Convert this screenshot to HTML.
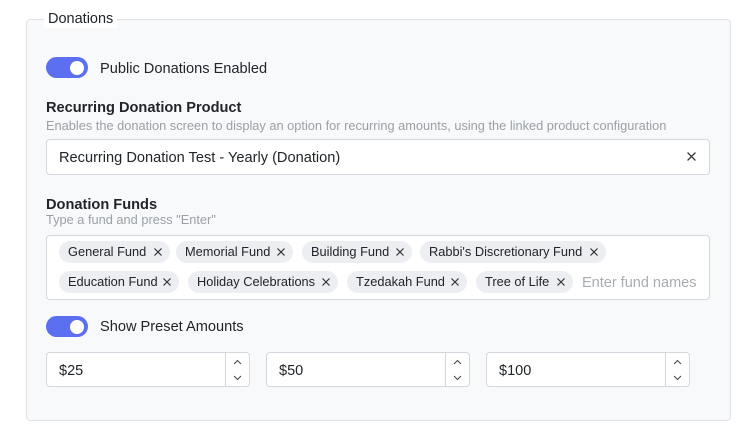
<!DOCTYPE html>
<html><head><style>
*{box-sizing:border-box;margin:0;padding:0}
body{width:749px;height:440px;background:#fff;font-family:"Liberation Sans",sans-serif;color:#212529;position:relative;overflow:hidden}
.a{position:absolute}
.fs{left:26px;top:19px;width:705px;height:402px;background:#f8f9fa;border:1px solid #dee2e6;border-radius:4px}
.leg{left:44px;top:10px;padding:0 4px;background:#fff;font-size:14.5px;line-height:18px}
.tog{width:42px;height:21px;border-radius:11px;background:#5b6ff0}
.tog:after{content:"";position:absolute;right:4px;top:3.5px;width:14px;height:14px;border-radius:50%;background:#fff}
.lbl{font-size:14.6px;line-height:16px;white-space:nowrap}
.b{font-weight:600}
.d{font-size:12.8px;color:#9aa0a6;line-height:14px;white-space:nowrap}
.box{background:#fff;border:1px solid #d4d8dd;border-radius:4px}
.tag{height:22px;border-radius:11px;background:#eceef1;font-size:12.8px;line-height:22px;padding-left:9px;white-space:nowrap}
.tag svg{position:absolute;right:8px;top:7px}
.num{height:35px;width:204px}
.num span{position:absolute;left:12px;top:10px;font-size:14.5px}
.sp{position:absolute;right:0;top:0;width:24px;height:33px;border-left:1px solid #d4d8dd}
.sp svg{position:absolute;left:7px}
</style></head><body>
<svg width="0" height="0" style="position:absolute"><defs>
<symbol id="x" viewBox="0 0 8 8"><path d="M0.5 0.5L7.5 7.5M7.5 0.5L0.5 7.5" stroke="#333" stroke-width="1.2" fill="none"/></symbol>
</defs></svg>
<div class="a fs"></div>
<div class="a leg">Donations</div>
<div class="a tog" style="left:46px;top:57px"></div>
<div class="a lbl" style="left:100px;top:61px">Public Donations Enabled</div>
<div class="a lbl b" style="left:46px;top:100px">Recurring Donation Product</div>
<div class="a d" style="left:46px;top:119px">Enables the donation screen to display an option for recurring amounts, using the linked product configuration</div>
<div class="a box" style="left:46px;top:139px;width:664px;height:36px"></div>
<div class="a lbl" style="left:59px;top:150px">Recurring Donation Test - Yearly (Donation)</div>
<svg class="a" style="left:687px;top:152px" width="9" height="9"><use href="#x"/></svg>
<div class="a lbl b" style="left:46px;top:197px">Donation Funds</div>
<div class="a d" style="left:46px;top:213px">Type a fund and press "Enter"</div>
<div class="a box" style="left:46px;top:235px;width:664px;height:65px"></div>
<div class="a tag" style="left:59px;top:241px;width:111px">General Fund<svg width="8" height="8"><use href="#x"/></svg></div>
<div class="a tag" style="left:176px;top:241px;width:117px">Memorial Fund<svg width="8" height="8"><use href="#x"/></svg></div>
<div class="a tag" style="left:302px;top:241px;width:110px">Building Fund<svg width="8" height="8"><use href="#x"/></svg></div>
<div class="a tag" style="left:420px;top:241px;width:186px">Rabbi's Discretionary Fund<svg width="8" height="8"><use href="#x"/></svg></div>
<div class="a tag" style="left:59px;top:271px;width:120px">Education Fund<svg width="8" height="8"><use href="#x"/></svg></div>
<div class="a tag" style="left:188px;top:271px;width:150px">Holiday Celebrations<svg width="8" height="8"><use href="#x"/></svg></div>
<div class="a tag" style="left:347px;top:271px;width:120px">Tzedakah Fund<svg width="8" height="8"><use href="#x"/></svg></div>
<div class="a tag" style="left:476px;top:271px;width:97px">Tree of Life<svg width="8" height="8"><use href="#x"/></svg></div>
<div class="a" style="left:582px;top:275px;font-size:14.5px;color:#a8adb3;width:115px;overflow:hidden;white-space:nowrap">Enter fund names</div>
<div class="a tog" style="left:46px;top:316px"></div>
<div class="a lbl" style="left:100px;top:319px">Show Preset Amounts</div>
<div class="a box num" style="left:46px;top:352px"><span>$25</span><div class="sp"><svg style="top:6px" width="9" height="6"><path d="M1 5L4.5 1.5L8 5" stroke="#444" fill="none"/></svg><svg style="top:22px" width="9" height="6"><path d="M1 1L4.5 4.5L8 1" stroke="#444" fill="none"/></svg></div></div>
<div class="a box num" style="left:266px;top:352px"><span>$50</span><div class="sp"><svg style="top:6px" width="9" height="6"><path d="M1 5L4.5 1.5L8 5" stroke="#444" fill="none"/></svg><svg style="top:22px" width="9" height="6"><path d="M1 1L4.5 4.5L8 1" stroke="#444" fill="none"/></svg></div></div>
<div class="a box num" style="left:486px;top:352px"><span>$100</span><div class="sp"><svg style="top:6px" width="9" height="6"><path d="M1 5L4.5 1.5L8 5" stroke="#444" fill="none"/></svg><svg style="top:22px" width="9" height="6"><path d="M1 1L4.5 4.5L8 1" stroke="#444" fill="none"/></svg></div></div>
</body></html>
